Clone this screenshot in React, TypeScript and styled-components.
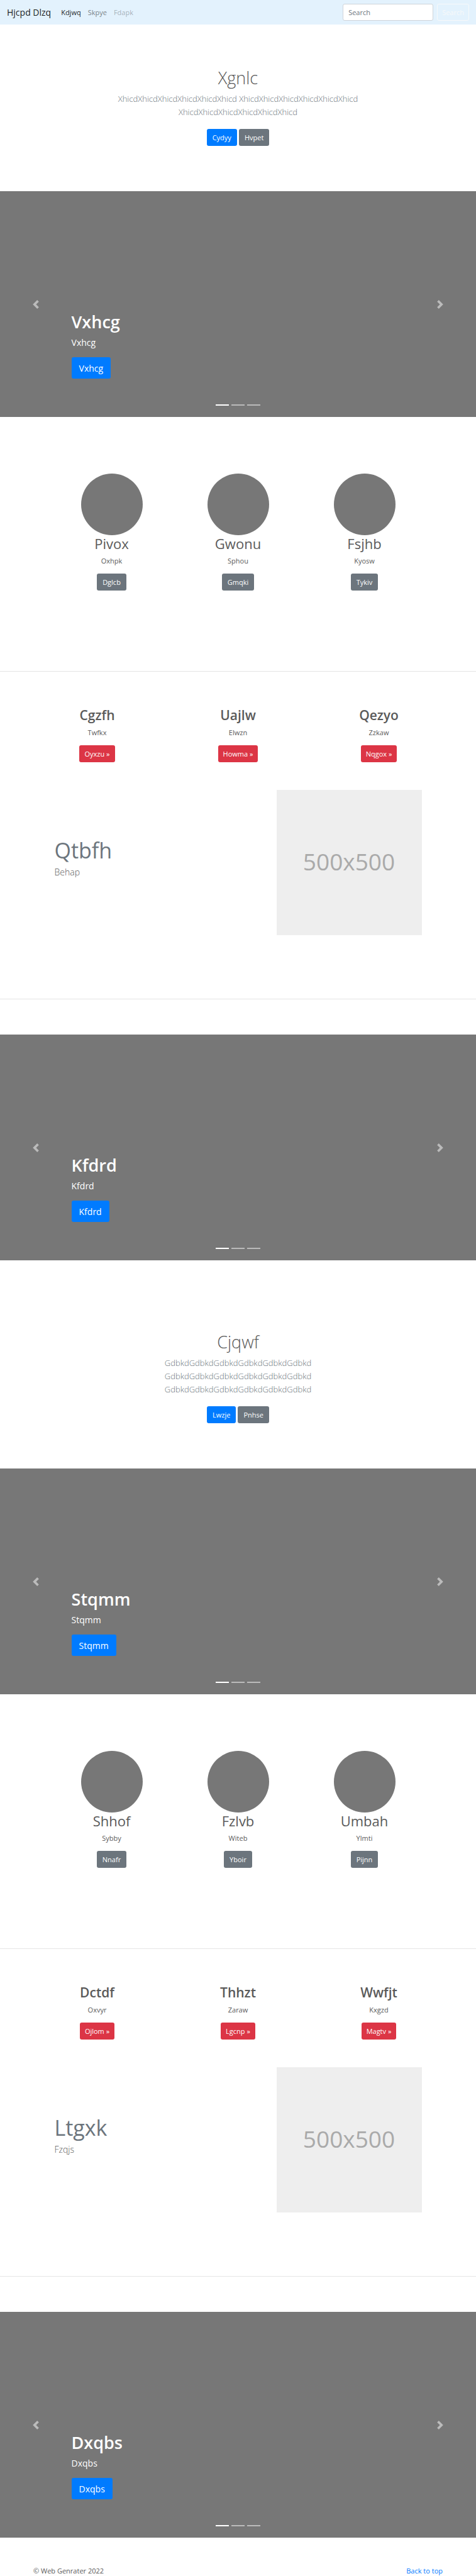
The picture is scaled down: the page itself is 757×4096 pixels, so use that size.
import React from "react";
import styled, { createGlobalStyle } from "styled-components";

const GlobalStyle = createGlobalStyle`
  *, *::before, *::after { box-sizing: border-box; }
  body {
    margin: 0;
    background: #fff;
    color: #5a5a5a;
    font-family: "Open Sans", "Noto Sans", sans-serif;
    font-size: 11px;
    line-height: 17px;
  }
  h1, h2, p { margin: 0; }
  button, input { font-family: inherit; }
`;

const Navbar = styled.nav`
  display: flex;
  align-items: center;
  padding: 6px 11px;
  background: #e3f2fd;
`;

const Brand = styled.a`
  margin-right: 16px;
  color: rgba(0, 0, 0, 0.9);
  font-size: 14px;
  line-height: 21px;
  text-decoration: none;
`;

const NavLinks = styled.div`
  display: flex;
  flex: 1;
  gap: 11px;
`;

const NavLink = styled.a<{ $alpha: number }>`
  color: rgba(0, 0, 0, ${(p) => p.$alpha});
  text-decoration: none;
`;

const SearchForm = styled.form`
  display: flex;
  gap: 6px;
`;

const SearchInput = styled.input`
  width: 144px;
  height: 27px;
  padding: 0 8px;
  border: 1px solid #ced4da;
  border-radius: 3px;
  background: #fff;
  color: #495057;
  font-size: 11px;
  &::placeholder { color: #6c757d; opacity: 1; }
`;

type Tone = "primary" | "secondary" | "danger";
const tones: Record<Tone, string> = {
  primary: "#007bff",
  secondary: "#6c757d",
  danger: "#dc3545",
};

const Button = styled.button<{ $tone: Tone; $large?: boolean }>`
  height: ${(p) => (p.$large ? 34 : 27)}px;
  padding: 0 ${(p) => (p.$large ? 12 : p.$tone === "danger" ? 8 : 9)}px;
  border: 0;
  border-radius: 3px;
  background: ${(p) => tones[p.$tone]};
  color: #fff;
  font-size: ${(p) => (p.$large ? 14 : 11)}px;
`;

const SearchButton = styled.button`
  height: 27px;
  padding: 0 7px;
  border: 1px solid #f8f9fa;
  border-radius: 3px;
  background: transparent;
  color: #f8f9fa;
  font-size: 11px;
`;

const HeroSection = styled.section`
  padding: 68px 11px 72px;
  text-align: center;
`;

const HeroTitle = styled.h1`
  font-size: 27px;
  font-weight: 300;
  line-height: 34px;
`;

const HeroLead = styled.p`
  max-width: 448px;
  margin: 6px auto 16px;
  color: #6c757d;
  font-size: 13px;
  font-weight: 300;
  line-height: 21px;
`;

const ButtonRow = styled.div`
  display: flex;
  justify-content: center;
  gap: 3px;
`;

const CarouselSection = styled.section`
  position: relative;
  display: flex;
  flex-direction: column;
  justify-content: flex-end;
  align-items: flex-start;
  min-height: 359px;
  margin-bottom: 45px;
  padding: 0 15% 61px;
  background: #777;
  color: #fff;
`;

const SlideTitle = styled.h1`
  font-size: 27px;
  font-weight: 600;
  line-height: 34px;
`;

const SlideText = styled.p`
  margin: 5px 0 13px;
  font-size: 14px;
  line-height: 21px;
`;

const Control = styled.button<{ $side: "left" | "right" }>`
  position: absolute;
  top: 0;
  bottom: 0;
  ${(p) => p.$side}: 0;
  display: flex;
  align-items: center;
  justify-content: center;
  width: 15%;
  padding: 0;
  border: 0;
  background: transparent;
  opacity: 0.5;
`;

const Indicators = styled.div`
  position: absolute;
  right: 0;
  bottom: 18px;
  left: 0;
  display: flex;
  justify-content: center;
  gap: 4px;
`;

const Indicator = styled.button<{ $active: boolean }>`
  width: 21px;
  height: 2px;
  padding: 0;
  border: 0;
  background: #fff;
  opacity: ${(p) => (p.$active ? 1 : 0.5)};
`;

const Profiles = styled.section`
  display: grid;
  grid-template-columns: repeat(3, 1fr);
  max-width: 603px;
  margin: 0 auto;
  padding: 45px 0 128px;
`;

const Columns = styled.section`
  display: grid;
  grid-template-columns: repeat(3, 1fr);
  max-width: 672px;
  margin: 0 auto;
  padding: 56px 0 44px;
`;

const Column = styled.article`
  display: flex;
  flex-direction: column;
  align-items: center;
  text-align: center;
`;

const Avatar = styled.div`
  width: 98px;
  height: 98px;
  border-radius: 50%;
  background: #777;
`;

const ColumnTitle = styled.h2<{ $bold?: boolean }>`
  font-size: ${(p) => (p.$bold ? 21 : 22)}px;
  font-weight: ${(p) => (p.$bold ? 600 : 400)};
  line-height: 27px;
`;

const ColumnText = styled.p`
  margin: 5px 0 12px;
`;

const Divider = styled.hr`
  height: 1px;
  margin: 0;
  border: 0;
  background: #e5e5e5;
`;

const FeatureRow = styled.section`
  display: flex;
  align-items: center;
  justify-content: space-between;
  max-width: 672px;
  margin: 0 auto;
  padding: 0 44px 101px;
`;

const FeatureTitle = styled.h2`
  color: #6c757d;
  font-size: 34px;
  font-weight: 400;
  line-height: 35px;
`;

const FeatureText = styled.p`
  margin: 6px 0 11px;
  font-size: 14px;
  font-weight: 300;
  line-height: 21px;
`;

const Placeholder = styled.div`
  display: flex;
  align-items: center;
  justify-content: center;
  width: 231px;
  height: 231px;
  padding-bottom: 4px;
  background: #eee;
  color: #aaa;
  font-size: 37px;
  line-height: 48px;
`;

const Spacer = styled.div`
  height: 56px;
`;

const FooterBar = styled.footer`
  display: flex;
  justify-content: space-between;
  padding: 0 53px;
  line-height: 16px;
`;

const FooterLink = styled.a`
  color: #007bff;
  text-decoration: none;
`;

function Chevron({ side }: { side: "left" | "right" }) {
  return (
    <svg width="14" height="14" viewBox="0 0 8 8" fill="#fff" aria-hidden="true">
      {side === "left" ? (
        <path d="M5.25 0l-4 4 4 4 1.5-1.5-2.5-2.5 2.5-2.5-1.5-1.5z" />
      ) : (
        <path d="M2.75 0l-1.5 1.5 2.5 2.5-2.5 2.5 1.5 1.5 4-4-4-4z" />
      )}
    </svg>
  );
}

function Hero(props: { title: string; lead: string; primary: string; secondary: string }) {
  return (
    <HeroSection>
      <HeroTitle>{props.title}</HeroTitle>
      <HeroLead>{props.lead}</HeroLead>
      <ButtonRow>
        <Button $tone="primary">{props.primary}</Button>
        <Button $tone="secondary">{props.secondary}</Button>
      </ButtonRow>
    </HeroSection>
  );
}

function Carousel({ label }: { label: string }) {
  return (
    <CarouselSection>
      <SlideTitle>{label}</SlideTitle>
      <SlideText>{label}</SlideText>
      <Button $tone="primary" $large>{label}</Button>
      <Control $side="left" aria-label="Previous"><Chevron side="left" /></Control>
      <Control $side="right" aria-label="Next"><Chevron side="right" /></Control>
      <Indicators>
        {[0, 1, 2].map((i) => (
          <Indicator key={i} $active={i === 0} aria-label={`Slide ${i + 1}`} />
        ))}
      </Indicators>
    </CarouselSection>
  );
}

type Item = [title: string, text: string, action: string];

function Marketing(props: { profiles: Item[]; columns: Item[]; feature: [string, string] }) {
  return (
    <>
      <Profiles>
        {props.profiles.map(([title, text, action]) => (
          <Column key={title}>
            <Avatar />
            <ColumnTitle>{title}</ColumnTitle>
            <ColumnText>{text}</ColumnText>
            <Button $tone="secondary">{action}</Button>
          </Column>
        ))}
      </Profiles>
      <Divider />
      <Columns>
        {props.columns.map(([title, text, action]) => (
          <Column key={title}>
            <ColumnTitle $bold>{title}</ColumnTitle>
            <ColumnText>{text}</ColumnText>
            <Button $tone="danger">{action} »</Button>
          </Column>
        ))}
      </Columns>
      <FeatureRow>
        <div>
          <FeatureTitle>{props.feature[0]}</FeatureTitle>
          <FeatureText>{props.feature[1]}</FeatureText>
        </div>
        <Placeholder>500x500</Placeholder>
      </FeatureRow>
      <Divider />
      <Spacer />
    </>
  );
}

export default function App() {
  return (
    <>
      <GlobalStyle />
      <Navbar>
        <Brand href="#">Hjcpd Dlzq</Brand>
        <NavLinks>
          <NavLink href="#" $alpha={0.9}>Kdjwq</NavLink>
          <NavLink href="#" $alpha={0.5}>Skpye</NavLink>
          <NavLink href="#" $alpha={0.3}>Fdapk</NavLink>
        </NavLinks>
        <SearchForm>
          <SearchInput type="search" placeholder="Search" aria-label="Search" />
          <SearchButton type="button">Search</SearchButton>
        </SearchForm>
      </Navbar>
      <main>
        <Hero
          title="Xgnlc"
          lead="XhicdXhicdXhicdXhicdXhicdXhicd XhicdXhicdXhicdXhicdXhicdXhicd XhicdXhicdXhicdXhicdXhicdXhicd"
          primary="Cydyy"
          secondary="Hvpet"
        />
        <Carousel label="Vxhcg" />
        <Marketing
          profiles={[
            ["Pivox", "Oxhpk", "Dglcb"],
            ["Gwonu", "Sphou", "Gmqki"],
            ["Fsjhb", "Kyosw", "Tykiv"],
          ]}
          columns={[
            ["Cgzfh", "Twfkx", "Oyxzu"],
            ["Uajlw", "Elwzn", "Howma"],
            ["Qezyo", "Zzkaw", "Nqgox"],
          ]}
          feature={["Qtbfh", "Behap"]}
        />
        <Carousel label="Kfdrd" />
        <Hero
          title="Cjqwf"
          lead="GdbkdGdbkdGdbkdGdbkdGdbkdGdbkd GdbkdGdbkdGdbkdGdbkdGdbkdGdbkd GdbkdGdbkdGdbkdGdbkdGdbkdGdbkd"
          primary="Lwzje"
          secondary="Pnhse"
        />
        <Carousel label="Stqmm" />
        <Marketing
          profiles={[
            ["Shhof", "Sybby", "Nnafr"],
            ["Fzlvb", "Witeb", "Yboir"],
            ["Umbah", "Ylmti", "Pijnn"],
          ]}
          columns={[
            ["Dctdf", "Oxvyr", "Ojlom"],
            ["Thhzt", "Zaraw", "Lgcnp"],
            ["Wwfjt", "Kxgzd", "Magtv"],
          ]}
          feature={["Ltgxk", "Fzqjs"]}
        />
        <Carousel label="Dxqbs" />
      </main>
      <FooterBar>
        <span>© Web Genrater 2022</span>
        <FooterLink href="#">Back to top</FooterLink>
      </FooterBar>
    </>
  );
}
